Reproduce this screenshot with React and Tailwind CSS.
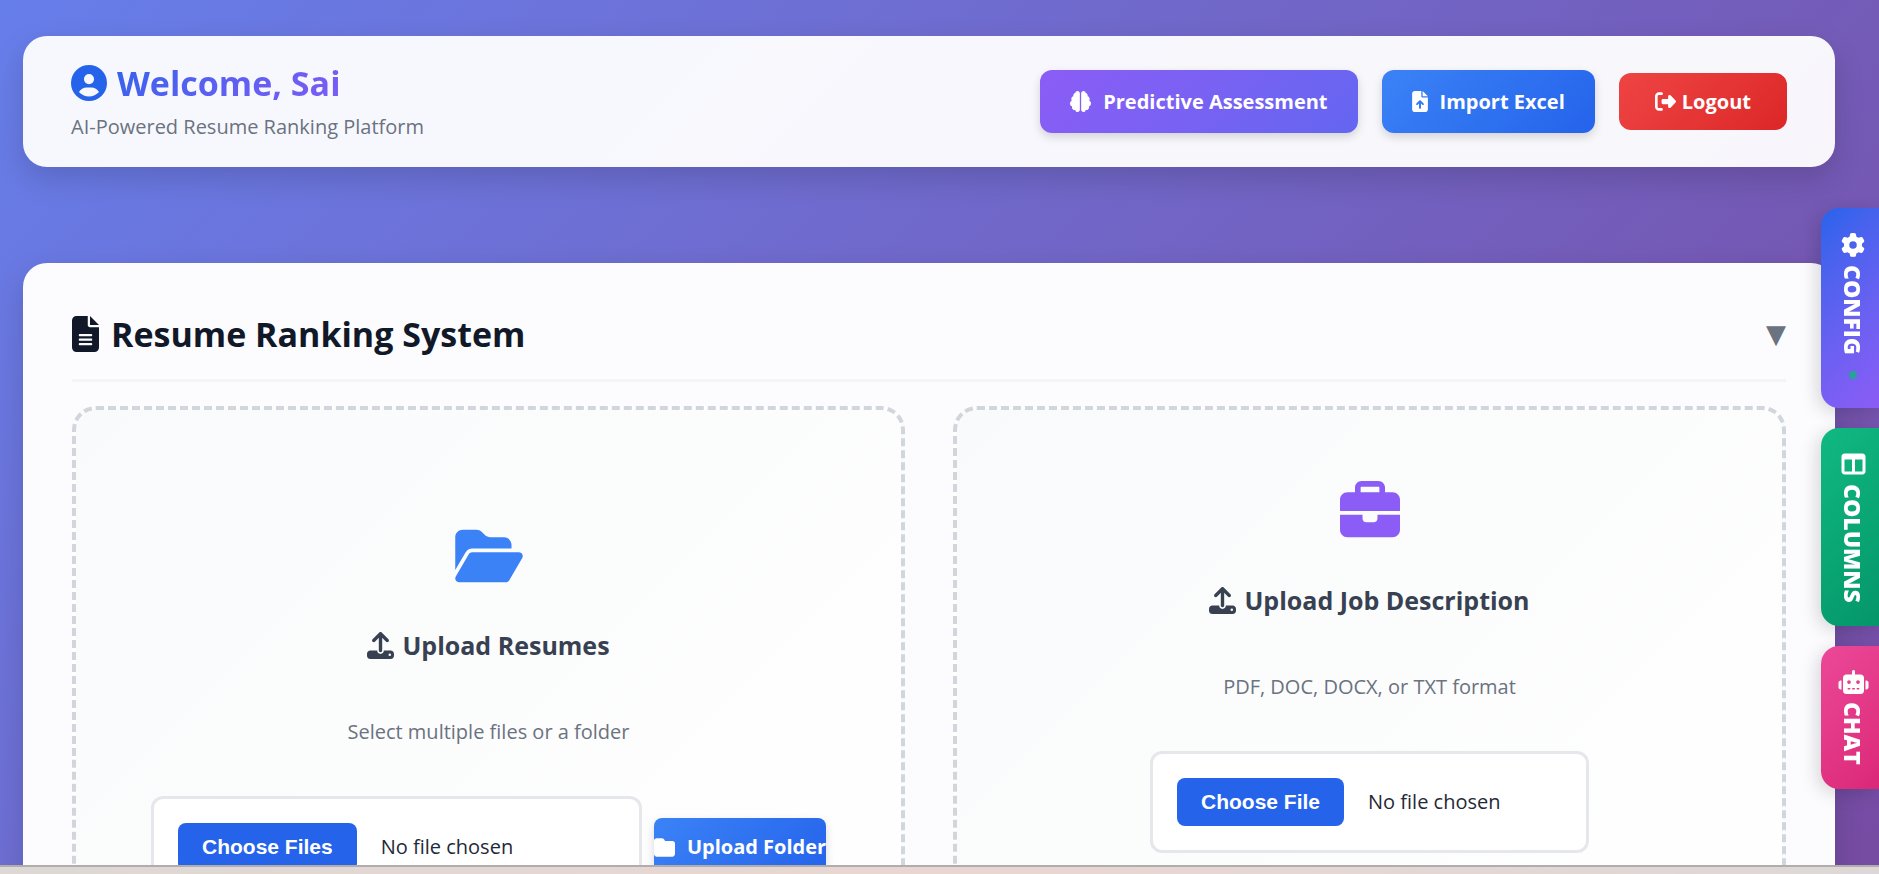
import { useState } from 'react';
import {
  FaCircleUser, FaBrain, FaFileArrowUp, FaRightFromBracket, FaFileLines, FaFolderOpen,
  FaUpload, FaBriefcase, FaFolder, FaGear, FaTableColumns, FaRobot
} from 'react-icons/fa6';

const FILE_INPUT =
  "w-full min-w-0 bg-white border-3 border-gray-200 rounded-xl p-6 text-[20px] leading-6 text-[#1f2937] file:mr-6 file:h-12 file:px-6 file:rounded-lg file:bg-[#2563eb] file:text-white file:font-['Liberation_Sans',sans-serif] file:font-bold file:text-[21px]";

function SideTab({ icon, label, className, children }) {
  return (
    <button
      type="button"
      className={`w-[58px] pl-[6px] rounded-l-[18px] flex flex-col items-center text-white shadow-[-4px_4px_18px_rgba(0,0,0,0.15)] ${className}`}
    >
      {icon}
      <span className="[writing-mode:vertical-rl] text-[23px] leading-8 font-extrabold mt-2">{label}</span>
      {children}
    </button>
  );
}

function UploadBox({ icon, title, hint, className, children }) {
  return (
    <section className={`flex flex-col items-center border-4 border-dashed border-gray-300 rounded-3xl bg-linear-135 from-[#f9fafb] to-white pb-24 ${className}`}>
      {icon}
      <h3 className="mt-10 flex items-center gap-2 text-[25px] leading-[38px] font-bold text-[#374151]">
        <FaUpload className="w-[27px] h-[27px]" />
        {title}
      </h3>
      <p className="mt-12 mb-11 text-[20px] leading-10 text-[#6b7280]">{hint}</p>
      {children}
    </section>
  );
}

export default function App() {
  const [open, setOpen] = useState(true);

  return (
    <div className="h-screen flex flex-col overflow-hidden bg-linear-135 from-[#667eea] to-[#764ba2] font-['Open_Sans','Noto_Sans',sans-serif]">
      <div className="flex-1 min-h-0 overflow-hidden pt-9 pl-[23px] pr-11">

        {/* Header */}
        <header className="flex items-center justify-between rounded-3xl bg-white/95 px-12 py-6 shadow-[0_12px_30px_rgba(0,0,0,0.15)]">
          <div>
            <h1 className="flex items-center gap-[10px] text-[34px] leading-[46px] font-bold">
              <FaCircleUser className="w-9 h-9 text-[#2563eb]" />
              <span className="bg-linear-135 from-[#3362ec] to-[#7c5cf5] bg-clip-text text-transparent">Welcome, Sai</span>
            </h1>
            <p className="mt-[5px] text-[20px] leading-8 text-[#6b7280]">AI-Powered Resume Ranking Platform</p>
          </div>

          <div className="flex items-center gap-6 text-white text-[20px] leading-7 font-bold">
            <button type="button" className="h-[63px] px-[30px] flex items-center gap-3 rounded-xl bg-linear-135 from-[#8b5cf6] to-[#6366f1] shadow-[0_4px_10px_rgba(0,0,0,0.15)]">
              <FaBrain className="w-[21px] h-[21px]" />
              Predictive Assessment
            </button>
            <button type="button" className="h-[63px] px-[30px] flex items-center gap-3 rounded-xl bg-linear-135 from-[#3b82f6] to-[#2563eb] shadow-[0_4px_10px_rgba(0,0,0,0.15)]">
              <FaFileArrowUp className="w-4 h-[21px]" />
              Import Excel
            </button>
            <button type="button" className="h-[57px] px-9 flex items-center gap-[6px] rounded-xl bg-linear-135 from-[#ef4444] to-[#dc2626]">
              <FaRightFromBracket className="w-[21px] h-[21px]" />
              Logout
            </button>
          </div>
        </header>

        {/* Ranking card */}
        <main className="mt-24 rounded-3xl border border-white/20 bg-white/98 p-12 shadow-[0_12px_30px_rgba(0,0,0,0.15)]">
          <div className="flex items-center justify-between pb-[23px] mb-6 border-b-3 border-gray-100">
            <h2 className="flex items-center gap-3 text-[34px] leading-[44px] font-bold text-[#111827]">
              <FaFileLines className="w-[27px] h-9" />
              Resume Ranking System
            </h2>
            <button
              type="button"
              aria-label="Toggle section"
              onClick={() => setOpen(!open)}
              className="text-[26px] leading-8 text-[#6b7280] font-['DejaVu_Sans',sans-serif]"
            >
              {open ? '▼' : '▶'}
            </button>
          </div>

          {open && (
            <div className="grid grid-cols-2 gap-12">
              <UploadBox
                className="pt-[116px]"
                icon={<FaFolderOpen className="w-[68px] h-[60px] text-[#3b82f6]" />}
                title="Upload Resumes"
                hint="Select multiple files or a folder"
              >
                <div className="flex items-center justify-center gap-3 w-full">
                  <div className="w-full max-w-[491px]">
                    <input type="file" multiple aria-label="Upload resumes" className={FILE_INPUT} />
                  </div>
                  <button type="button" className="w-[172px] h-[58px] shrink-0 overflow-hidden rounded-lg flex items-center justify-center gap-3 whitespace-nowrap text-white text-[20px] leading-7 font-bold bg-linear-135 from-[#3b82f6] to-[#2563eb] shadow-[0_4px_10px_rgba(0,0,0,0.15)]">
                    <FaFolder className="w-[21px] h-[21px] shrink-0" />
                    Upload Folder
                  </button>
                </div>
              </UploadBox>

              <UploadBox
                className="pt-[71px]"
                icon={<FaBriefcase className="w-[60px] h-[60px] text-[#8b5cf6]" />}
                title="Upload Job Description"
                hint="PDF, DOC, DOCX, or TXT format"
              >
                <div className="w-full max-w-[439px]">
                  <input type="file" aria-label="Upload job description" className={FILE_INPUT} />
                </div>
              </UploadBox>
            </div>
          )}
        </main>
      </div>

      {/* Docked tabs */}
      <nav className="fixed right-0 top-[208px] flex flex-col gap-5">
        <SideTab
          icon={<FaGear className="w-6 h-6" />}
          label="CONFIG"
          className="h-[200px] pt-[25px] bg-linear-135 from-[#2563eb] to-[#8b5cf6]"
        >
          <span className="mt-4 w-2 h-2 rounded-full bg-[#28a299]"></span>
        </SideTab>
        <SideTab
          icon={<FaTableColumns className="w-[25px] h-6" />}
          label="COLUMNS"
          className="h-[198px] pt-6 bg-linear-135 from-[#10b981] to-[#059669]"
        />
        <SideTab
          icon={<FaRobot className="w-[31px] h-6" />}
          label="CHAT"
          className="h-[143px] pt-6 bg-linear-135 from-[#ec4899] to-[#db2777]"
        />
      </nav>

      <footer className="relative h-[9px] shrink-0 border-t-2 border-[#b1adac] bg-linear-to-r from-[#ddd8d5] via-[#e9d6d2] to-[#ddd8d7]"></footer>
    </div>
  );
}
